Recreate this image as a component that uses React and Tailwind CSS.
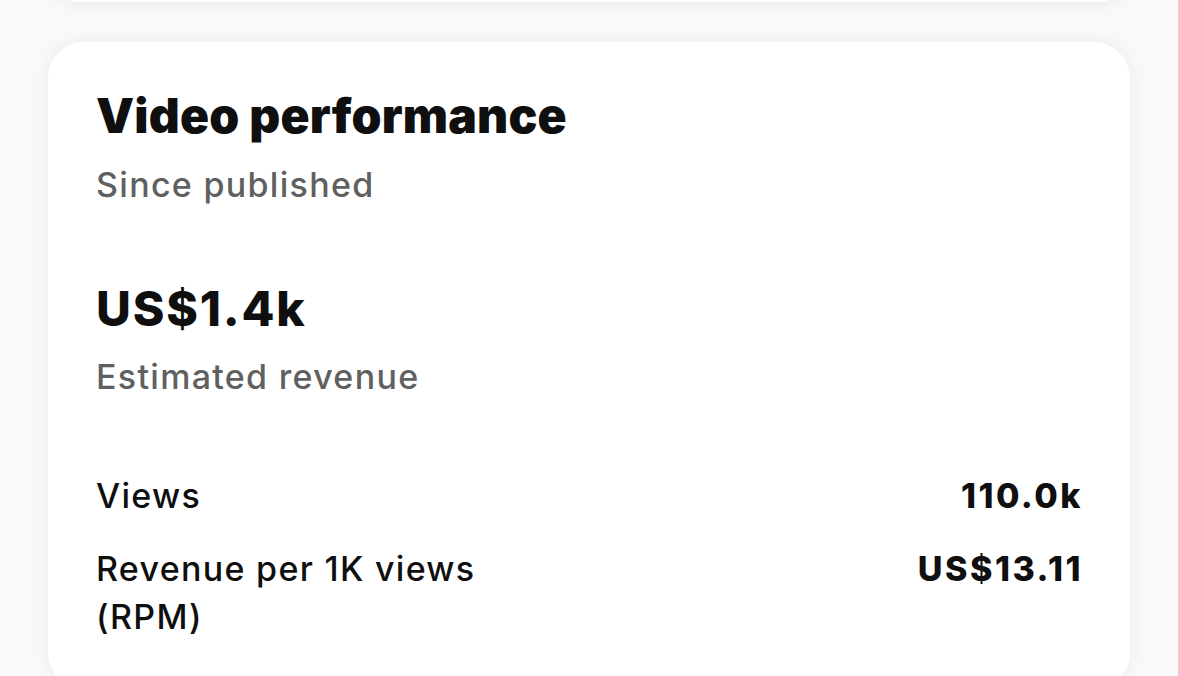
import React from "react";

const stats = [
  { label: "Views", value: "110.0k" },
  { label: ["Revenue per 1K views", "(RPM)"], value: "US$13.11" },
];

export default function App() {
  return (
    <div
      className="h-[676px] w-full overflow-hidden bg-[#f9f9f9] px-12 text-[#0f0f0f]"
      style={{ fontFamily: "Inter, 'Noto Sans', sans-serif" }}
    >
      {/* tail of the card above */}
      <div className="-mt-[60px] h-[62px] rounded-[36px] bg-white shadow-[0_2px_18px_rgba(0,0,0,0.06)]" />

      <div className="mt-[40px] rounded-[36px] bg-white px-12 pt-[46px] pb-12 shadow-[0_0_20px_rgba(0,0,0,0.06)]">
        <h2 className="text-[48px] font-black leading-[56px] tracking-[0.2px]">Video performance</h2>
        <p className="mt-[19px] text-[34px] font-medium leading-[44px] tracking-[1.3px] text-[#606060]">Since published</p>

        <p className="mt-[74px] text-[48px] font-extrabold leading-[56px] tracking-[1.8px]">US$1.4k</p>
        <p className="mt-[18px] text-[34px] font-medium leading-[44px] tracking-[1.3px] text-[#606060]">Estimated revenue</p>

        <div className="mt-[73px] flex flex-col gap-[25px]">
          {stats.map((s) => (
            <div key={s.value} className="flex items-start justify-between text-[34px] leading-[48px]">
              <div className="font-medium tracking-[1.3px]">
                {(Array.isArray(s.label) ? s.label : [s.label]).map((l) => (
                  <div key={l}>{l}</div>
                ))}
              </div>
              <div className="-mr-[1px] font-extrabold tracking-[2.5px]">{s.value}</div>
            </div>
          ))}
        </div>
      </div>
    </div>
  );
}
